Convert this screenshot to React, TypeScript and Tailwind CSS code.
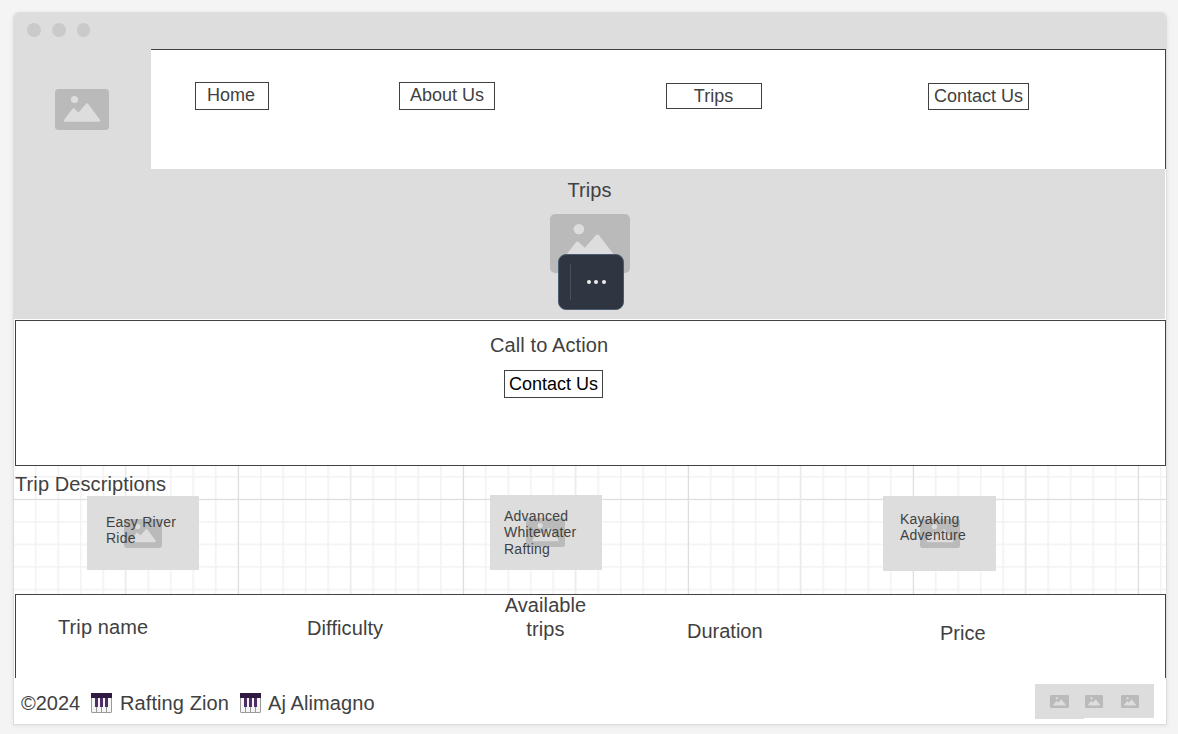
function Placeholder({ className }: { className: string }) {
  return (
    <svg viewBox="0 0 54 41" preserveAspectRatio="none" className={className} aria-hidden="true">
      <rect width="54" height="41" rx="3.5" fill="#bababa" />
      <circle cx="19.5" cy="10.5" r="3.6" fill="#dddddd" />
      <path
        d="M9.3 30.5 L17.5 19.7 Q18.5 18.4 19.5 19.7 L23.5 23.5 L30.8 15 Q32 13.6 33.2 15 L44.8 30.5 Q46 32.8 43.8 32.8 H10.5 Q8.3 32.8 9.3 30.5 Z"
        fill="#dddddd"
      />
    </svg>
  );
}

function Piano({ className }: { className: string }) {
  return (
    <svg viewBox="0 0 21 20" className={className} aria-hidden="true">
      <path d="M0 0H21V19L20 20H1L0 19Z" fill="#9b9b9b" />
      <path d="M1 4H5V19H1ZM6 4H10V19H6ZM11 4H15V19H11ZM16 4H20V19H16Z" fill="#f4f4f4" />
      <rect width="21" height="5" fill="#2f1b40" />
      <path d="M4 5H7V14H4ZM9 5H12V14H9ZM14 5H17V14H14Z" fill="#4f2d66" />
    </svg>
  );
}

export default function App() {
  return (
    <div className="h-[734px] w-[1178px] overflow-hidden bg-[#f4f4f4] pl-[13px] pt-3 font-['Liberation_Sans',sans-serif] text-xl leading-6 tracking-[0.1px] text-[#414141]">
      <div className="flex h-[713px] w-[1154px] flex-col overflow-hidden rounded-t-[6px] border-x border-b border-[#dddddd] bg-white shadow-[0_1px_4px_rgba(0,0,0,0.08)]">
        <div className="flex h-[37px] shrink-0 items-center gap-[11px] bg-[#dddddd] pb-px pl-[13px]">
          <span className="size-[14px] rounded-full bg-[#cacaca]" />
          <span className="size-[14px] rounded-full bg-[#cacaca]" />
          <span className="h-[14px] w-[13px] rounded-full bg-[#cacaca]" />
        </div>

        <header className="flex h-[120px] shrink-0">
          <div className="w-[137px] bg-[#dddddd] pl-[41px] pt-10">
            <Placeholder className="h-[41px] w-[54px]" />
          </div>
          <nav className="flex w-[1015px] items-start border-r border-t border-[#414141] pl-11 pt-8 text-lg leading-[25px] tracking-normal">
            <a className="h-7 w-[74px] whitespace-nowrap border border-[#414141] pr-[2px] text-center">Home</a>
            <a className="ml-[130px] h-7 w-24 whitespace-nowrap border border-[#414141] text-center">About Us</a>
            <a className="ml-[171px] mt-px h-[26px] w-24 whitespace-nowrap border border-[#414141] pr-px text-center">Trips</a>
            <a className="ml-[166px] mt-px flex h-[27px] w-[101px] justify-center whitespace-nowrap border border-[#414141]">Contact Us</a>
          </nav>
        </header>

        <section className="mr-px flex h-[150px] shrink-0 flex-col items-center bg-[#dddddd] pt-[9px]">
          <h1>Trips</h1>
          <div className="relative mt-3">
            <Placeholder className="h-[59px] w-20" />
            <div className="absolute left-2 top-10 flex h-14 w-[66px] items-center rounded-lg border border-[#4c5c70] bg-[#2f3541] pl-[11px]">
              <span className="h-9 w-px bg-[#4b515c]" />
              <span className="ml-4 flex gap-[3.5px]">
                <span className="size-1 rounded-full bg-[#eeeeee]" />
                <span className="size-1 rounded-full bg-[#eeeeee]" />
                <span className="size-1 rounded-full bg-[#eeeeee]" />
              </span>
            </div>
          </div>
        </section>

        <section className="ml-px mt-px flex h-[146px] shrink-0 flex-col border border-[#414141] pl-[474px] pt-3">
          <h2 className="whitespace-nowrap">Call to Action</h2>
          <button className="ml-[14px] mt-[13px] flex h-7 w-[99px] justify-center whitespace-nowrap border border-[#414141] pt-px text-lg leading-[25px] tracking-normal text-black">
            Contact Us
          </button>
        </section>

        <section className="relative h-32 shrink-0">
          <svg className="absolute inset-0 h-32 w-full" aria-hidden="true">
            <defs>
              <pattern id="minor" x="20.9" y="10.1" width="22.5" height="22.5" patternUnits="userSpaceOnUse">
                <path d="M0.8 0V22.5M0 0.8H22.5" stroke="#f2f2f2" strokeWidth="1.5" />
              </pattern>
              <pattern id="major" x="224" y="33" width="225" height="225" patternUnits="userSpaceOnUse">
                <path d="M0.5 0V225M0 0.5H225" stroke="#dedede" />
                <path d="M112.5 0V225" stroke="#ebebeb" strokeWidth="1.5" />
              </pattern>
            </defs>
            <rect width="100%" height="100%" fill="url(#minor)" />
            <rect width="100%" height="100%" fill="url(#major)" />
          </svg>
          <div className="relative pl-px pt-[6px]">
            <h2 className="h-6 whitespace-nowrap">Trip Descriptions</h2>
            <div className="flex items-start pl-[72px] text-sm leading-[16.4px] tracking-[0.25px]">
              <article className="relative h-[74px] w-28 bg-[#dddddd] pl-[19px] pt-[18px]">
                <Placeholder className="absolute left-[37px] top-[23px] h-[29px] w-[38px]" />
                <p className="relative whitespace-nowrap">Easy River<br />Ride</p>
              </article>
              <article className="relative ml-[291px] -mt-px h-[75px] w-28 bg-[#dddddd] pl-[14px] pt-[13px]">
                <Placeholder className="absolute left-[36px] top-[23px] h-[29px] w-[39px]" />
                <p className="relative whitespace-nowrap">Advanced<br />Whitewater<br />Rafting</p>
              </article>
              <article className="relative ml-[281px] h-[75px] w-[113px] bg-[#dddddd] pl-[17px] pt-[15px]">
                <Placeholder className="absolute left-[37px] top-[23px] h-[29px] w-[40px]" />
                <p className="relative whitespace-nowrap">Kayaking<br />Adventure</p>
              </article>
            </div>
          </div>
        </section>

        <section className="ml-px flex h-[84px] shrink-0 items-start border-x border-t border-[#414141] pl-[42px]">
          <span className="mt-5 w-[249px] whitespace-nowrap">Trip name</span>
          <span className="mt-[21px] w-[197px] whitespace-nowrap">Difficulty</span>
          <span className="-mt-[2px] w-[83px] text-center">Available trips</span>
          <span className="ml-[100px] mt-6 w-[253px] whitespace-nowrap tracking-normal">Duration</span>
          <span className="mt-[26px] tracking-normal">Price</span>
        </section>

        <footer className="flex items-start pl-[7px] pr-3 pt-[6px]">
          <div className="flex h-[37px] items-center whitespace-nowrap">
            <span className="w-[70px] tracking-normal">©2024</span>
            <Piano className="h-5 w-[21px]" />
            <span className="ml-2 w-[119px]">Rafting Zion</span>
            <Piano className="ml-px h-5 w-[21px]" />
            <span className="ml-[7px]">Aj Alimagno</span>
          </div>
          <div className="ml-auto flex h-[35px]">
            <div className="h-[35px] w-[49px] bg-[#dddddd] pl-[15px] pt-[11px]">
              <Placeholder className="h-[13px] w-[19px]" />
            </div>
            <div className="h-[34px] w-[35px] bg-[#dddddd] pl-[1px] pt-[11px]">
              <Placeholder className="h-[13px] w-[18px]" />
            </div>
            <div className="h-[34px] w-[35px] bg-[#dddddd] pl-[2px] pt-[11px]">
              <Placeholder className="h-[13px] w-[18px]" />
            </div>
          </div>
        </footer>
      </div>
    </div>
  );
}
